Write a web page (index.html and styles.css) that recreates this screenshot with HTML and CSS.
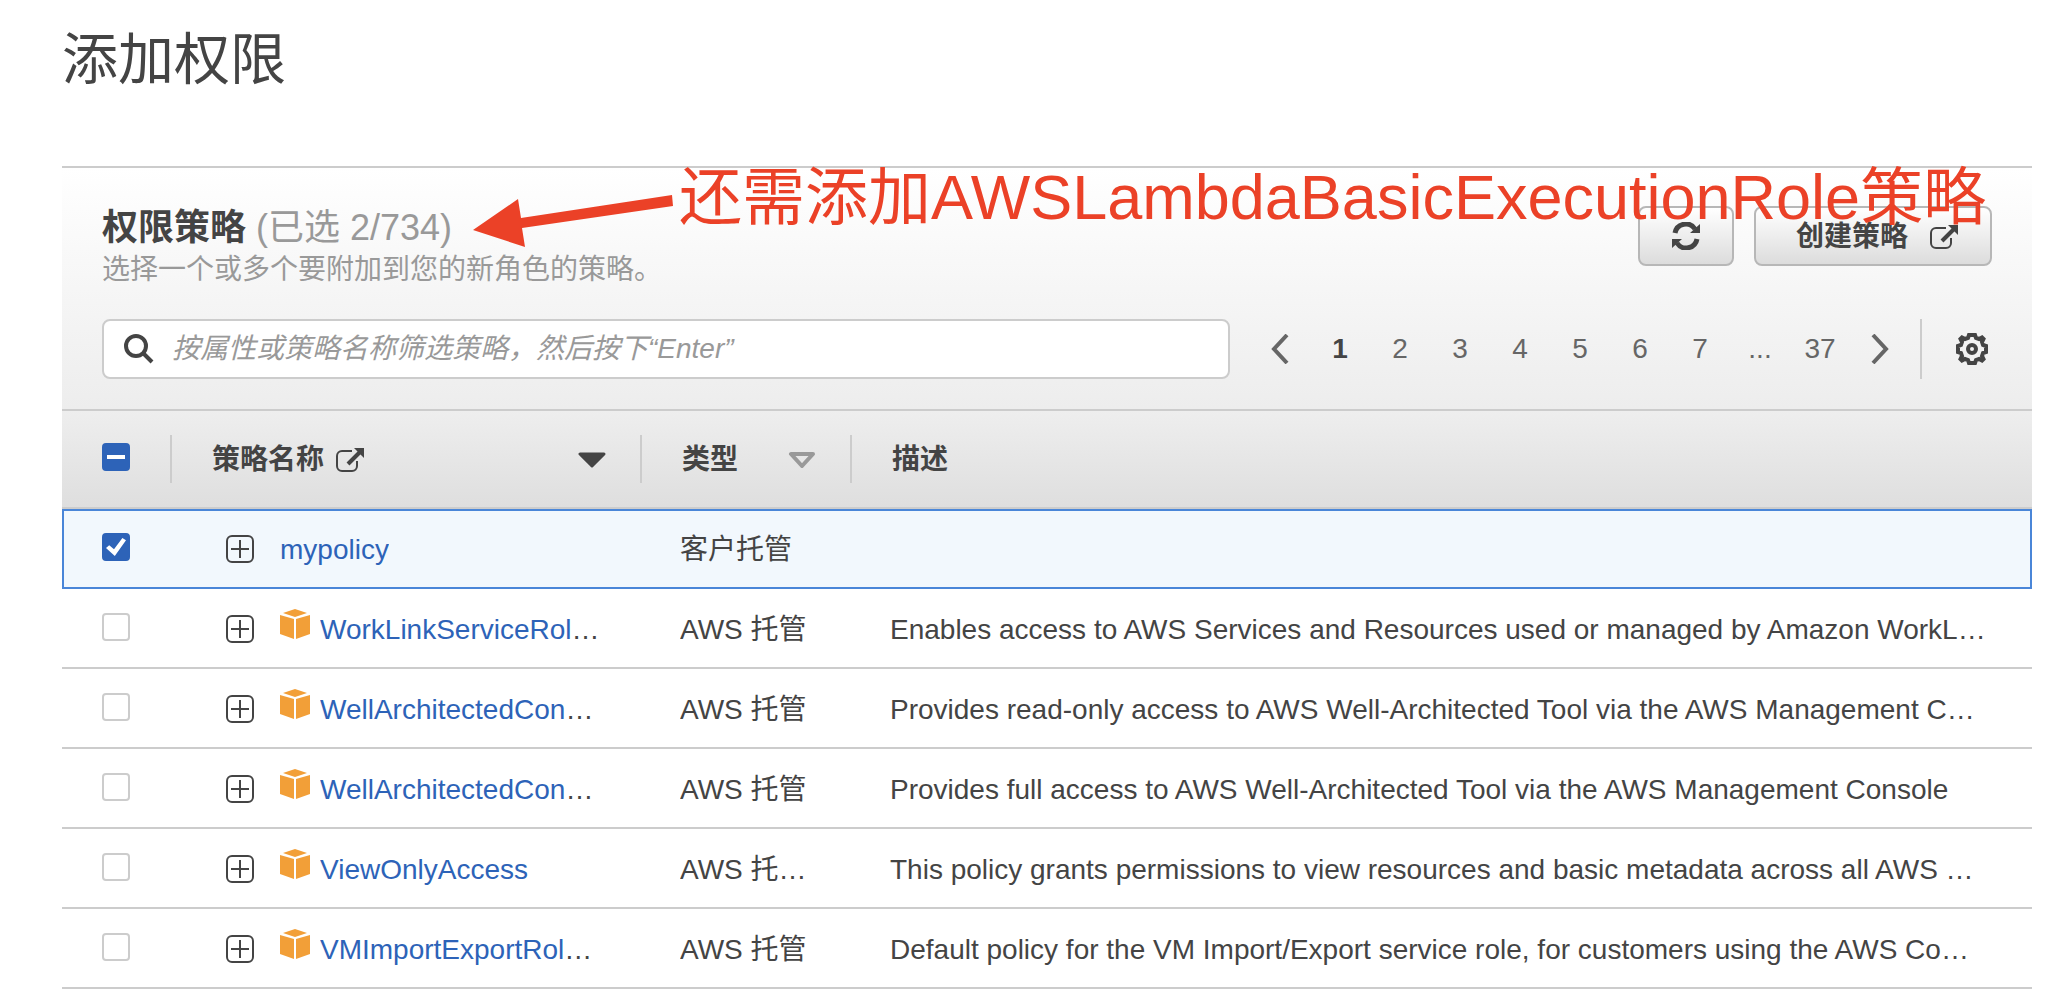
FILE: index.html
```html
<!DOCTYPE html>
<html lang="zh-CN">
<head>
  <meta charset="utf-8">
  <meta name="viewport" content="width=device-width, initial-scale=1">
  <title>添加权限</title>
  <link rel="stylesheet" href="styles.css">
</head>
<body>
  <svg class="sprite" aria-hidden="true">
    <symbol id="external" viewBox="0 0 28 24">
      <path d="M16 3H6a5 5 0 0 0-5 5v10a5 5 0 0 0 5 5h10a5 5 0 0 0 5-5v-5" fill="none" stroke="currentColor" stroke-width="2"/>
      <path d="M12 16L24 4" fill="none" stroke="currentColor" stroke-width="4"/>
      <path d="M18 0h10v10z" fill="currentColor"/>
    </symbol>
    <symbol id="expand" viewBox="0 0 28 28">
      <rect x="1" y="1" width="26" height="26" rx="5" fill="none" stroke="currentColor" stroke-width="2"/>
      <path d="M14 5v18M5 14h18" fill="none" stroke="currentColor" stroke-width="2"/>
    </symbol>
    <symbol id="cube" viewBox="0 0 30 30">
      <path d="M15 0L27 4L15 8L3 4zM0 6L14 10V30L0 25zM30 6L16 10V30L30 25z" fill="currentColor"/>
    </symbol>
  </svg>

  <main class="page">
    <h1 class="page-title">添加权限</h1>

    <section class="panel">
      <div class="panel-top">
        <header class="panel-head">
          <div>
            <h2 class="panel-title">权限策略 <span class="count">(已选 2/734)</span></h2>
            <p class="panel-note">选择一个或多个要附加到您的新角色的策略。</p>
          </div>
          <div class="actions">
            <button class="btn btn-icon" type="button" aria-label="刷新">
              <svg width="28" height="28" viewBox="0 0 28 28">
                <path d="M3 11A11 11 0 0 1 23 7M25 17A11 11 0 0 1 5 21" fill="none" stroke="currentColor" stroke-width="5"/>
                <path d="M28 2v9h-10zM0 26v-9h10z" fill="currentColor"/>
              </svg>
            </button>
            <button class="btn btn-text" type="button">创建策略 <svg width="28" height="24"><use href="#external"/></svg></button>
          </div>
        </header>

        <div class="tools">
          <label class="search">
            <svg width="30" height="30" viewBox="0 0 30 30" aria-hidden="true">
              <circle cx="12" cy="12" r="10" fill="none" stroke="currentColor" stroke-width="4"/>
              <path d="M19 19l9 9" stroke="currentColor" stroke-width="4"/>
            </svg>
            <input type="text" aria-label="筛选策略" placeholder="按属性或策略名称筛选策略，然后按下“Enter”">
          </label>
          <nav class="pager" aria-label="分页">
            <button type="button" aria-label="上一页"><svg width="18" height="30" viewBox="0 0 18 30"><path d="M16 1L3 15l13 14" fill="none" stroke="currentColor" stroke-width="4"/></svg></button>
            <button class="current" type="button" aria-current="page">1</button>
            <button type="button">2</button>
            <button type="button">3</button>
            <button type="button">4</button>
            <button type="button">5</button>
            <button type="button">6</button>
            <button type="button">7</button>
            <span>...</span>
            <button type="button">37</button>
            <button type="button" aria-label="下一页"><svg width="18" height="30" viewBox="0 0 18 30"><path d="M2 1l13 14L2 29" fill="none" stroke="currentColor" stroke-width="4"/></svg></button>
          </nav>
          <div class="settings">
            <button type="button" aria-label="设置">
              <svg width="32" height="32" viewBox="0 0 32 32" fill="none" stroke="currentColor">
                <path d="M13 2h6l1 3l3 1l3-1.500l1.500 1.500l-1.500 3l1 3l3 1v6l-3 1l-1 3l1.500 3l-1.500 1.500l-3-1.500l-3 1l-1 3h-6l-1-3l-3-1l-3 1.500l-1.500-1.500l1.500-3l-1-3l-3-1v-6l3-1l1-3l-1.500-3l1.500-1.500l3 1.500l3-1z" stroke-width="4"/>
                <circle cx="16" cy="16" r="4" stroke-width="4"/>
              </svg>
            </button>
          </div>
        </div>
      </div>

      <table class="policies">
        <colgroup><col class="col-check"><col class="col-name"><col class="col-type"><col></colgroup>
        <thead>
          <tr>
            <th scope="col"><input class="tick mixed" type="checkbox" aria-label="全选" aria-checked="mixed"></th>
            <th scope="col"><div class="th-box">策略名称 <svg width="28" height="24"><use href="#external"/></svg>
              <button class="sort" type="button" aria-label="按策略名称排序"><svg width="28" height="16" viewBox="0 0 28 16"><path d="M2 2h24L14 14z" fill="currentColor" stroke="currentColor" stroke-width="3" stroke-linejoin="round"/></svg></button></div></th>
            <th scope="col"><div class="th-box">类型
              <button class="sort idle" type="button" aria-label="按类型排序"><svg width="28" height="16" viewBox="0 0 28 16"><path d="M3 2h22L14 14z" fill="none" stroke="currentColor" stroke-width="4" stroke-linejoin="round"/></svg></button></div></th>
            <th scope="col"><div class="th-box">描述</div></th>
          </tr>
        </thead>
        <tbody>
          <tr class="selected">
            <td><input class="tick" type="checkbox" aria-label="mypolicy" checked></td>
            <td><div class="name"><button class="expand" type="button" aria-label="展开"><svg width="28" height="28"><use href="#expand"/></svg></button><span class="clip"><a href="#">mypolicy</a></span></div></td>
            <td><div class="clip">客户托管</div></td>
            <td></td>
          </tr>
          <tr>
            <td><input class="tick" type="checkbox" aria-label="WorkLinkServiceRol…"></td>
            <td><div class="name"><button class="expand" type="button" aria-label="展开"><svg width="28" height="28"><use href="#expand"/></svg></button><svg class="cube" width="30" height="30"><use href="#cube"/></svg><span class="clip"><a href="#">WorkLinkServiceRol</a>…</span></div></td>
            <td><div class="clip">AWS 托管</div></td>
            <td><div class="clip">Enables access to AWS Services and Resources used or managed by Amazon WorkL…</div></td>
          </tr>
          <tr>
            <td><input class="tick" type="checkbox" aria-label="WellArchitectedCon…"></td>
            <td><div class="name"><button class="expand" type="button" aria-label="展开"><svg width="28" height="28"><use href="#expand"/></svg></button><svg class="cube" width="30" height="30"><use href="#cube"/></svg><span class="clip"><a href="#">WellArchitectedCon</a>…</span></div></td>
            <td><div class="clip">AWS 托管</div></td>
            <td><div class="clip">Provides read-only access to AWS Well-Architected Tool via the AWS Management C…</div></td>
          </tr>
          <tr>
            <td><input class="tick" type="checkbox" aria-label="WellArchitectedCon…"></td>
            <td><div class="name"><button class="expand" type="button" aria-label="展开"><svg width="28" height="28"><use href="#expand"/></svg></button><svg class="cube" width="30" height="30"><use href="#cube"/></svg><span class="clip"><a href="#">WellArchitectedCon</a>…</span></div></td>
            <td><div class="clip">AWS 托管</div></td>
            <td><div class="clip">Provides full access to AWS Well-Architected Tool via the AWS Management Console</div></td>
          </tr>
          <tr>
            <td><input class="tick" type="checkbox" aria-label="ViewOnlyAccess"></td>
            <td><div class="name"><button class="expand" type="button" aria-label="展开"><svg width="28" height="28"><use href="#expand"/></svg></button><svg class="cube" width="30" height="30"><use href="#cube"/></svg><span class="clip"><a href="#">ViewOnlyAccess</a></span></div></td>
            <td><div class="clip">AWS 托…</div></td>
            <td><div class="clip">This policy grants permissions to view resources and basic metadata across all AWS …</div></td>
          </tr>
          <tr>
            <td><input class="tick" type="checkbox" aria-label="VMImportExportRol…"></td>
            <td><div class="name"><button class="expand" type="button" aria-label="展开"><svg width="28" height="28"><use href="#expand"/></svg></button><svg class="cube" width="30" height="30"><use href="#cube"/></svg><span class="clip"><a href="#">VMImportExportRol</a>…</span></div></td>
            <td><div class="clip">AWS 托管</div></td>
            <td><div class="clip">Default policy for the VM Import/Export service role, for customers using the AWS Co…</div></td>
          </tr>
        </tbody>
      </table>

      <div class="callout">
        <svg width="200" height="52" viewBox="0 0 200 52" aria-hidden="true">
          <path d="M0 35L45 4L48 23L199 0L200 11L49 33L52 52z" fill="currentColor"/>
        </svg>
        <span>还需添加AWSLambdaBasicExecutionRole策略</span>
      </div>
    </section>
  </main>
</body>
</html>
```
FILE: styles.css
```css
* {
  box-sizing: border-box;
}

body {
  margin: 0;
  background: #fff;
  color: #444;
  font: 28px/40px "Liberation Sans", "Noto Sans CJK SC", sans-serif;
}

button,
input {
  font: inherit;
  color: inherit;
}

button {
  padding: 0;
  border: 0;
  background: none;
  cursor: pointer;
}

svg {
  display: block;
  flex: none;
}

a {
  color: #2d63b8;
  text-decoration: none;
}

.sprite {
  position: absolute;
  width: 0;
  height: 0;
}

.page {
  padding: 28px 28px 18px 62px;
}

.page-title {
  margin: 0 0 74px;
  font-size: 56px;
  font-weight: 400;
  line-height: 64px;
}

.panel {
  position: relative;
  border-top: 2px solid #ccc;
}

.panel-top {
  padding: 38px 40px 30px;
  background: linear-gradient(#fff, #ededed);
}

.panel-head {
  display: flex;
  justify-content: space-between;
  align-items: flex-start;
  margin-bottom: 29px;
}

.panel-title {
  margin: 0;
  font-size: 36px;
  line-height: 44px;
}

.count {
  color: #999;
  font-weight: 400;
}

.panel-note {
  margin: 0;
  color: #999;
}

.actions {
  display: flex;
  gap: 20px;
}

.btn {
  display: flex;
  align-items: center;
  height: 60px;
  border: 2px solid #b7b7b7;
  border-radius: 8px;
  background: linear-gradient(#fff, #dcdcdc);
  font-weight: 700;
}

.btn-icon {
  padding: 0 32px;
}

.btn-text {
  gap: 22px;
  padding: 2px 32px 0 40px;
}

.tools {
  display: flex;
  align-items: center;
  height: 60px;
}

.search {
  display: flex;
  flex: 1;
  align-items: center;
  gap: 18px;
  height: 60px;
  margin-right: 20px;
  padding: 0 20px;
  border: 2px solid #ccc;
  border-radius: 8px;
  background: #fff;
}

.search input {
  flex: 1;
  min-width: 0;
  padding: 0;
  border: 0;
  outline: 0;
  background: none;
}

.search input::placeholder {
  color: #999;
  font-style: italic;
}

.pager {
  display: flex;
  color: #666;
}

.pager > * {
  display: grid;
  place-items: center;
  width: 60px;
}

.pager .current {
  color: #444;
  font-weight: 700;
}

.settings {
  display: flex;
  align-items: center;
  height: 60px;
  margin-left: 10px;
  padding: 0 4px 0 34px;
  border-left: 2px solid #ccc;
}

.policies {
  width: 100%;
  border-spacing: 0;
  border-top: 2px solid #ccc;
  table-layout: fixed;
}

.col-check {
  width: 108px;
}

.col-name {
  width: 470px;
}

.col-type {
  width: 210px;
}

.policies thead {
  background: linear-gradient(#eee, #dedede);
}

.policies th {
  height: 98px;
  padding: 0;
  border-bottom: 2px solid #ccc;
  text-align: left;
}

.th-box {
  display: flex;
  align-items: center;
  gap: 12px;
  height: 48px;
  padding: 2px 34px 0 40px;
  border-left: 2px solid #ccc;
}

.sort {
  margin-left: auto;
}

.idle {
  color: #999;
}

.policies td {
  height: 80px;
  padding: 0 38px 0 40px;
  border-top: 2px solid transparent;
  border-bottom: 2px solid #ccc;
}

.policies td:first-child,
.policies th:first-child {
  padding: 0 0 4px 40px;
}

.policies .selected td {
  border-color: #4a86d8;
  background: #f2f8fd;
}

.policies .selected td:first-child {
  padding-left: 38px;
  border-left: 2px solid #4a86d8;
}

.policies .selected td:last-child {
  border-right: 2px solid #4a86d8;
}

.tick {
  display: grid;
  place-items: center;
  width: 28px;
  height: 28px;
  margin: 0;
  border: 2px solid #ccc;
  border-radius: 4px;
  background: #fff;
  appearance: none;
}

.tick:checked,
.mixed {
  border-color: #2d63b8;
  background: #2d63b8;
}

.mixed::before {
  width: 18px;
  height: 4px;
  background: #fff;
  content: "";
}

.tick:checked::before {
  width: 20px;
  height: 18px;
  background: #fff;
  clip-path: polygon(0 55%, 16% 40%, 40% 62%, 82% 0, 100% 13%, 44% 100%);
  content: "";
}

.name {
  display: flex;
  align-items: center;
  padding-left: 16px;
}

.expand {
  margin-right: 26px;
}

.cube {
  margin: 0 10px 10px 0;
  color: #f29f38;
}

.clip {
  min-width: 0;
  padding-top: 2px;
  overflow: hidden;
  text-overflow: ellipsis;
  white-space: nowrap;
}

/* Red note laid over the panel header, its arrow pointing at the selection count */
.callout {
  position: absolute;
  top: -7px;
  left: 411px;
  display: flex;
  align-items: flex-start;
  gap: 6px;
  color: #eb4127;
  font-size: 63px;
  line-height: 72px;
  white-space: nowrap;
  pointer-events: none;
}

.callout svg {
  margin-top: 34px;
}
```
